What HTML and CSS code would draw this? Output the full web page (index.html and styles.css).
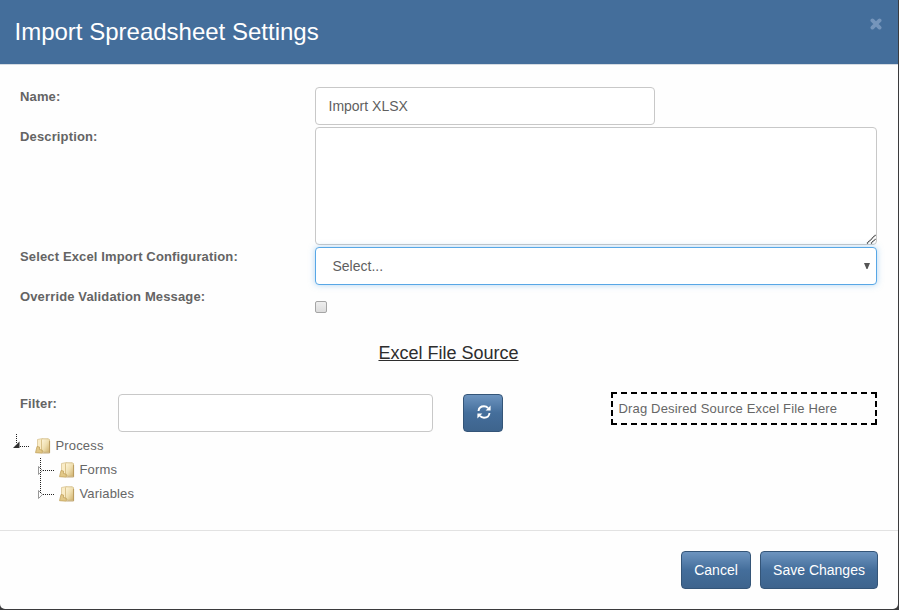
FILE: index.html
```html
<!DOCTYPE html>
<html lang="en">
<head>
<meta charset="utf-8">
<title>Import Spreadsheet Settings</title>
<link rel="stylesheet" href="styles.css">
</head>
<body>
<div class="modal">
  <header class="modal-header">
    <h1>Import Spreadsheet Settings</h1>
    <button class="close" aria-label="Close"><svg width="12" height="12" viewBox="0 0 12 12"><path d="M2.400 2.400l7.200 7.200M9.600 2.400l-7.200 7.200" stroke="#7595bb" stroke-width="3.800" stroke-linecap="round"/></svg></button>
  </header>
  <main class="modal-body">
    <div class="form-grid">
      <label for="name">Name:</label>
      <input id="name" class="control name" type="text" value="Import XLSX">
      <label for="desc">Description:</label>
      <div class="control area" id="desc" role="textbox"><svg class="grip" width="10" height="10" viewBox="0 0 10 10"><path d="M1 9.500L9.500 1M5 9.500L9.500 5" stroke="#333" stroke-width="1.100" stroke-dasharray="1.400 .4" fill="none"/></svg></div>
      <label for="config">Select Excel Import Configuration:</label>
      <div class="control select" id="config" role="combobox"><span>Select...</span><svg width="6" height="6" viewBox="0 0 6 6"><path d="M0 0h6L3.500 6h-1z" fill="#555"/></svg></div>
      <label for="override">Override Validation Message:</label>
      <div class="check" id="override" role="checkbox" aria-checked="false"></div>
    </div>
    <h2>Excel File Source</h2>
    <div class="source-row">
      <label for="filter">Filter:</label>
      <input id="filter" class="control filter" type="text">
      <button class="btn refresh" aria-label="Refresh"><svg width="14" height="14" viewBox="0 0 14 14"><path d="M1.500 6C1.800 3 4.100 1.300 7 1.300c1.700 0 3.100.7 4.100 1.800M12.500 8c-.3 3-2.600 4.700-5.500 4.700-1.700 0-3.100-.7-4.100-1.800" fill="none" stroke="#fff" stroke-width="1.900"/><path d="M13.600 .5v5H8.600zM.4 13.500v-5h5z" fill="#fff"/></svg></button>
      <div class="drop">Drag Desired Source Excel File Here</div>
    </div>
    <svg class="defs" width="0" height="0">
      <defs>
        <linearGradient id="gold" x1="0" y1="0" x2="1" y2="1"><stop offset="0" stop-color="#fff6dc"/><stop offset=".5" stop-color="#efdfb0"/><stop offset="1" stop-color="#ceb06c"/></linearGradient>
        <symbol id="folder" viewBox="0 0 16 16"><path d="M2.500 1.500l5-1 1 1v12l-6 .5z" fill="#faecc6" stroke="#d5bf8a" stroke-width=".7"/><path d="M6.500 1.800l1-1h6l1 1v12.400h-6l-2-3z" fill="url(#gold)" stroke="#ccb070" stroke-width=".7"/><path d="M2 8.500l2.500.5v2.500l2.500.5.5 3.200-7-.5z" fill="#e2c887" stroke="#bf9d58" stroke-width=".7"/><path d="M14.600 3v12H8" fill="none" stroke="#ad8b49" stroke-width=".7"/></symbol>
      </defs>
    </svg>
    <ul class="tree">
      <li><svg class="joint" width="18" height="24" viewBox="0 0 18 24"><path d="M4.500 0v10M8 12.500h10" stroke="#222" stroke-dasharray="1 1"/><path d="M1 14h6.500V7.500z" fill="#303030"/></svg><svg class="folder" width="16" height="16"><use href="#folder"/></svg>Process</li>
      <li class="child"><svg class="joint" width="18" height="24" viewBox="0 0 18 24"><path d="M2.500 8.500v8l4-4z" fill="#fff" stroke="#999"/><path d="M4.500 0v24M7 12.500h11" stroke="#222" stroke-dasharray="1 1"/></svg><svg class="folder" width="16" height="16"><use href="#folder"/></svg>Forms</li>
      <li class="child"><svg class="joint" width="18" height="24" viewBox="0 0 18 24"><path d="M2.500 8.500v8l4-4z" fill="#fff" stroke="#999"/><path d="M4.500 0v12M7 12.500h11" stroke="#222" stroke-dasharray="1 1"/></svg><svg class="folder" width="16" height="16"><use href="#folder"/></svg>Variables</li>
    </ul>
  </main>
  <footer class="modal-footer">
    <button class="btn cancel">Cancel</button>
    <button class="btn save">Save Changes</button>
  </footer>
</div>
</body>
</html>
```
FILE: styles.css
```css
* { box-sizing: border-box; }
body {
  margin: 0;
  height: 610px;
  overflow: hidden;
  background: #3b3b3d;
  font: 13px/20px "Liberation Sans", Arial, sans-serif;
  color: #555;
}
.modal {
  width: 898px;
  height: 609px;
  display: flex;
  flex-direction: column;
  background: #fefefe;
  border-radius: 0 0 5px 5px;
  overflow: hidden;
}
.modal-header {
  height: 65px;
  flex: none;
  display: flex;
  justify-content: space-between;
  align-items: flex-start;
  padding: 17px 16px 0 14.500px;
  background: #446e9b;
  border-bottom: 1px solid #d5dbe2;
}
h1 { margin: 0; font-size: 24px; line-height: 30px; font-weight: 400; color: #fff; }
.close { border: 0; padding: 0; margin-top: 1px; background: none; line-height: 0; }
.modal-body { flex: 1; padding: 22px 21px 0 20px; }
.form-grid {
  display: grid;
  grid-template-columns: 295px 562px;
  grid-template-rows: 38px 118px 38px 38px;
  row-gap: 2px;
}
label { font-weight: 700; letter-spacing: .14px; color: #646464; }
.control {
  height: 38px;
  border: 1px solid #c8c8c8;
  border-radius: 4px;
  background: #fff;
  font: 14px/20px "Liberation Sans", Arial, sans-serif;
  color: #5f5f5f;
  padding: 8px 12.500px;
  outline: 0;
}
.name { width: 340px; }
.area { height: 118px; display: flex; justify-content: flex-end; align-items: flex-end; padding: 0; }
.select {
  display: flex;
  justify-content: space-between;
  align-items: center;
  padding: 0 6px 0 16.500px;
  border-color: #58a7e6;
  box-shadow: 0 0 6px rgba(102, 175, 233, .5);
}
.check {
  width: 12px;
  height: 12px;
  margin-top: 14px;
  border: 1px solid #a5a5a5;
  border-radius: 2px;
  background: linear-gradient(#eee, #dcdcdc);
}
h2 {
  margin: 18px 0 0;
  text-align: center;
  font-size: 18px;
  line-height: 20px;
  font-weight: 400;
  color: #2d2d2d;
  text-decoration: underline;
}
.source-row { display: flex; align-items: flex-start; margin-top: 31px; }
.source-row label { width: 98px; }
.filter { width: 315px; margin-right: 30px; }
.btn {
  height: 38px;
  padding: 0;
  border: 1px solid #345578;
  border-radius: 4px;
  background: linear-gradient(#6d94bf, #446e9b 50%, #3e648d);
  color: #fff;
  font: 14px/20px "Liberation Sans", Arial, sans-serif;
}
.refresh { width: 40px; display: flex; align-items: center; justify-content: center; }
.refresh svg { margin: -2px 0 0 1px; }
.drop {
  width: 266px;
  height: 33px;
  margin: -2px 0 0 108px;
  padding: 4px 5.500px;
  border: 2px dashed #000;
  line-height: 21px;
  letter-spacing: .16px;
  color: #666;
}
.defs { display: block; }
.tree { list-style: none; margin: 2px 0 0 -8px; padding: 0; }
.tree li { height: 24px; display: flex; align-items: center; letter-spacing: .16px; color: #666; }
.tree .child { padding-left: 24px; }
.folder { margin: 0 4.500px 0 5px; }
.modal-footer {
  height: 79px;
  flex: none;
  border-top: 1px solid #e2e2e2;
  display: flex;
  justify-content: flex-end;
  gap: 9px;
  padding: 20px 20px 0;
}
.cancel { width: 70px; }
.save { width: 118px; }
```
